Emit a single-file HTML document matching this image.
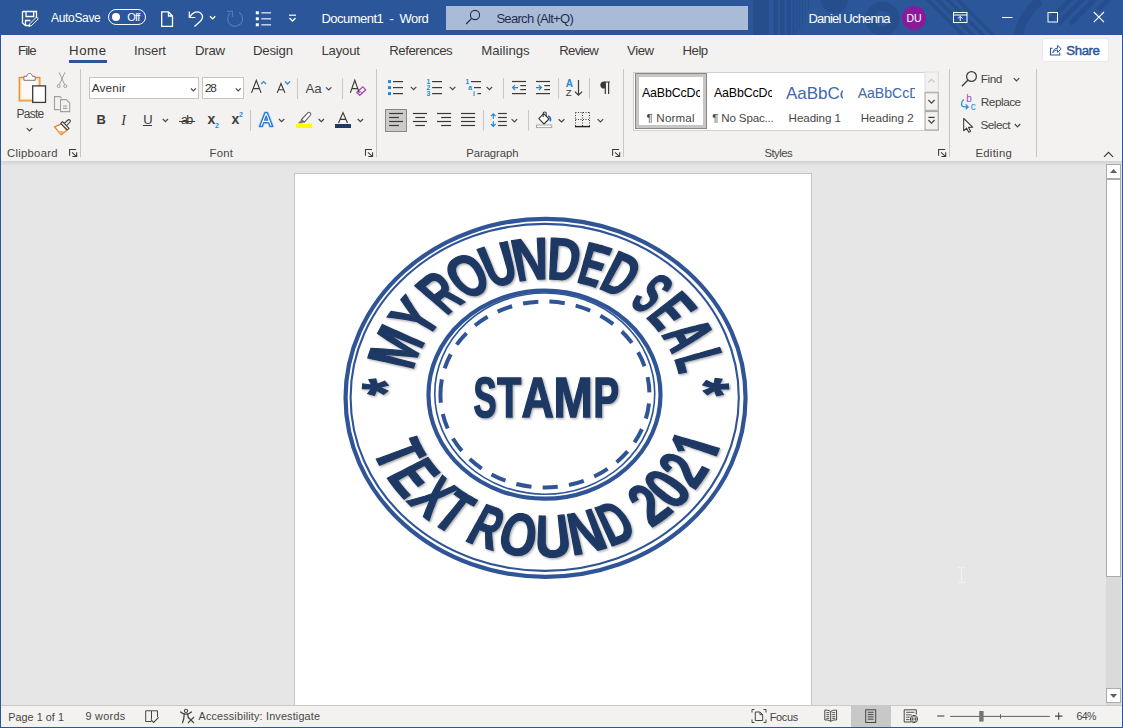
<!DOCTYPE html>
<html><head><meta charset="utf-8"><title>Document1 - Word</title>
<style>
html,body{margin:0;padding:0;}
body{width:1123px;height:728px;overflow:hidden;position:relative;background:#e6e6e6;font-family:"Liberation Sans", sans-serif;}
.a{position:absolute;}
.t{position:absolute;white-space:pre;line-height:1;font-family:"Liberation Sans", sans-serif;}
svg{position:absolute;overflow:visible;}
.sep{position:absolute;width:1px;background:#c8c6c4;}
</style></head>
<body>
<div class="a" style="left:0;top:0;width:1123px;height:35px;background:#2b579a"></div>
<svg style="left:0;top:0" width="1123" height="35" viewBox="0 0 1123 35"><defs><clipPath id="tb"><rect x="0" y="0" width="1123" height="35"/></clipPath></defs>
<g clip-path="url(#tb)" fill="#264e8d" stroke="none">
<rect x="753" y="0" width="16" height="35"/>
<rect x="773.5" y="0" width="4.5" height="35"/><rect x="780" y="0" width="4.5" height="35"/><rect x="786.5" y="0" width="4.5" height="35"/><rect x="792.5" y="0" width="2" height="35"/><rect x="796" y="0" width="1.5" height="35"/><rect x="799" y="0" width="1.2" height="30"/><rect x="802" y="0" width="1" height="25"/><rect x="805" y="0" width="1" height="18"/><rect x="808" y="0" width="1" height="10"/>
<circle cx="834.5" cy="-1" r="14"/>
<circle cx="882.5" cy="18.7" r="12.5" fill="none" stroke="#264e8d" stroke-width="9"/>
<g stroke="#264e8d" stroke-width="4" fill="none"><path d="M926 -2 L966 38 M936 -2 L976 38 M946 -2 L986 38 M956 -2 L996 38"/>
<path d="M1040 0 C1028 10 1021 22 1018 36" stroke-width="9"/>
<path d="M1048 22 L1072 -2 M1058 24 L1084 -2 M1070 24 L1096 -2 M1098 10 L1110 -2" stroke-width="5"/></g>
</g></svg>

<div class="a" style="left:1px;top:35px;width:1121px;height:126px;background:#f3f2f1"></div>
<div class="a" style="left:1px;top:161px;width:1121px;height:5px;background:linear-gradient(#d2d2d2,#e6e6e6)"></div>
<div class="a" style="left:294px;top:173px;width:516px;height:533px;background:#fff;border:1px solid #c6c6c6;border-bottom:none;box-sizing:content-box"></div>
<div class="a" style="left:1106px;top:164px;width:15px;height:541px;background:#dadada"></div>
<div class="a" style="left:1106px;top:164px;width:13px;height:13px;background:#fff;border:1px solid #ababab"></div>
<svg style="left:1110px;top:168.8px" width="7.2" height="4"><path d="M0 4 L3.6 0 L7.2 4Z" fill="#606060"/></svg>
<div class="a" style="left:1106px;top:179px;width:13px;height:396px;background:#fff;border:1px solid #ababab"></div>
<div class="a" style="left:1106px;top:688px;width:13px;height:13px;background:#fff;border:1px solid #ababab"></div>
<svg style="left:1110px;top:693.5px" width="7.2" height="4"><path d="M0 0 L3.6 4 L7.2 0Z" fill="#606060"/></svg>
<div class="a" style="left:961px;top:568px;width:1px;height:14px;background:#f1f1f1"></div>
<div class="a" style="left:958px;top:567px;width:3px;height:1px;background:#f1f1f1"></div><div class="a" style="left:962px;top:567px;width:3px;height:1px;background:#f1f1f1"></div>
<div class="a" style="left:958px;top:582px;width:3px;height:1px;background:#f1f1f1"></div><div class="a" style="left:962px;top:582px;width:3px;height:1px;background:#f1f1f1"></div>
<div class="a" style="left:1px;top:705px;width:1121px;height:22px;background:#f3f2f1;border-top:1px solid #c8c8c8;box-sizing:border-box"></div>
<div class="a" style="left:851px;top:706px;width:40px;height:21px;background:#c8c8c8"></div>
<div class="a" style="left:0;top:35px;width:1px;height:693px;background:#2b579a"></div>
<div class="a" style="left:1122px;top:35px;width:1px;height:693px;background:#2b579a"></div>
<div class="a" style="left:0;top:727px;width:1123px;height:1px;background:#2b579a"></div>
<span class="t" style="left:51.1px;top:11.7px;font-size:12px;color:#fff;letter-spacing:-0.335px;">AutoSave</span>
<div class="a" style="left:108px;top:9px;width:38px;height:16.2px;border:1.2px solid #fff;border-radius:8.2px;box-sizing:border-box"></div>
<div class="a" style="left:111.9px;top:12.9px;width:8.3px;height:8.3px;border-radius:4.2px;background:#fff"></div>
<span class="t" style="left:127.2px;top:12.2px;font-size:11px;color:#fff;letter-spacing:-0.692px;">Off</span>
<span class="t" style="left:321.4px;top:11.7px;font-size:13px;color:#fff;letter-spacing:-0.511px;">Document1  -  Word</span>
<div class="a" style="left:446px;top:6px;width:302px;height:24px;background:#aabbd7"></div>
<span class="t" style="left:496.4px;top:11.7px;font-size:13px;color:#1f2f4f;letter-spacing:-0.688px;">Search (Alt+Q)</span>
<span class="t" style="left:808.5px;top:11.7px;font-size:13px;color:#fff;letter-spacing:-0.801px;">Daniel Uchenna</span>
<div class="a" style="left:902px;top:5.5px;width:24px;height:24px;border-radius:12px;background:#8a1a9a"></div>
<span class="t" style="left:906.5px;top:12.9px;font-size:10.5px;color:#fff;letter-spacing:-0.172px;">DU</span>
<svg style="left:0;top:0" width="1123" height="35" viewBox="0 0 1123 35" fill="none" stroke="#fff" stroke-width="1.1">
<!-- save w/ pen -->
<path d="M22.5 11.5 H36.5 V18 M30 25.5 H25.5 L22.5 23 V11.5 M25.5 25.5 V20.5 H30.5 M26 11.5 V16.5 H33.7 V11.5" stroke-width="1.3"/>
<path d="M29 26.5 L30 23.5 L36.5 17 L38.3 18.8 L31.8 25.3 Z" stroke-width="1"/>
<!-- new doc -->
<path d="M161.7 11.8 H168.5 L172.5 16 V26.3 H161.7 Z M168.5 11.8 V16 H172.5" stroke-width="1.3"/>
<!-- undo -->
<path d="M189.3 11.5 V17.5 H195.3" stroke-width="1.2"/>
<path d="M189.8 17 C192 12.5 197 10.5 200.5 13 C203.5 15.3 203 19 200 21.5 L194.5 26.5" stroke-width="1.3"/>
<path d="M210 16.3 L212.6 18.9 L215.2 16.3" stroke-width="1.3"/>
<!-- redo dim -->
<g stroke="#4f7cb8" stroke-width="1.2"><path d="M227 11.4 H232.5 V17"/><path d="M230.1 13.2 A7.5 7.5 0 1 0 239.2 12.5"/></g>
<!-- bullets -->
<g fill="#fff" stroke="none"><rect x="255.8" y="11.3" width="3" height="3"/><rect x="255.8" y="17.3" width="3" height="3"/><rect x="255.8" y="23.3" width="3" height="3"/>
<rect x="261.3" y="12.3" width="9.8" height="1.1"/><rect x="261.3" y="18.3" width="9.8" height="1.1"/><rect x="261.3" y="24.3" width="9.8" height="1.1"/></g>
<!-- customize -->
<path d="M289 15.2 H296" stroke-width="1.2"/><path d="M289.5 18 L292.5 21 L295.5 18" stroke-width="1.3"/>
<!-- search -->
<circle cx="475" cy="15" r="4.6" stroke="#1f2f4f" stroke-width="1.1"/><path d="M471.7 18.4 L466.2 24" stroke="#1f2f4f" stroke-width="1.2"/>
<!-- ribbon display -->
<rect x="953.5" y="12.5" width="13.5" height="10" stroke-width="1"/><path d="M953.5 15 H967" stroke-width="1"/><path d="M960.2 21 V16.5 M958 18.5 L960.2 16.3 L962.4 18.5" stroke-width="1"/>
<!-- min max close -->
<path d="M1002 17.5 H1012.5" stroke-width="1"/>
<rect x="1048" y="12.5" width="9.5" height="9.5" stroke-width="1"/>
<path d="M1093.8 12 L1104 22.2 M1104 12 L1093.8 22.2" stroke-width="1.1"/>
</svg>

<span class="t" style="left:18.0px;top:44.0px;font-size:13.2px;color:#3b3a39;letter-spacing:-0.917px;">File</span>
<span class="t" style="left:69.0px;top:44.0px;font-size:13.2px;color:#323130;letter-spacing:0.604px;">Home</span>
<span class="t" style="left:134.0px;top:44.0px;font-size:13.2px;color:#3b3a39;letter-spacing:-0.197px;">Insert</span>
<span class="t" style="left:195.0px;top:44.0px;font-size:13.2px;color:#3b3a39;letter-spacing:-0.260px;">Draw</span>
<span class="t" style="left:253.0px;top:44.0px;font-size:13.2px;color:#3b3a39;letter-spacing:-0.212px;">Design</span>
<span class="t" style="left:321.5px;top:44.0px;font-size:13.2px;color:#3b3a39;letter-spacing:-0.222px;">Layout</span>
<span class="t" style="left:389.2px;top:44.0px;font-size:13.2px;color:#3b3a39;letter-spacing:-0.439px;">References</span>
<span class="t" style="left:481.3px;top:44.0px;font-size:13.2px;color:#3b3a39;letter-spacing:0.004px;">Mailings</span>
<span class="t" style="left:559.2px;top:44.0px;font-size:13.2px;color:#3b3a39;letter-spacing:-0.710px;">Review</span>
<span class="t" style="left:627.1px;top:44.0px;font-size:13.2px;color:#3b3a39;letter-spacing:-0.453px;">View</span>
<span class="t" style="left:682.6px;top:44.0px;font-size:13.2px;color:#3b3a39;letter-spacing:-0.508px;">Help</span>
<div class="a" style="left:69px;top:60px;width:38px;height:3px;background:#2b579a"></div>
<div class="a" style="left:1042.4px;top:38.4px;width:67px;height:23.2px;background:#fff;border:1px solid #ebe9e7;border-radius:3px;box-sizing:border-box"></div>
<span class="t" style="left:1066.3px;top:44.0px;font-size:13.2px;color:#2b579a;letter-spacing:-0.401px;-webkit-text-stroke:0.45px #2b579a;">Share</span>
<div class="sep" style="left:80px;top:69px;height:88px"></div>
<div class="sep" style="left:376px;top:69px;height:88px"></div>
<div class="sep" style="left:623px;top:69px;height:88px"></div>
<div class="sep" style="left:949px;top:69px;height:88px"></div>
<div class="sep" style="left:1036px;top:69px;height:88px"></div>
<span class="t" style="left:7.1px;top:147.5px;font-size:11.3px;color:#484644;letter-spacing:0.255px;">Clipboard</span>
<span class="t" style="left:209.6px;top:147.5px;font-size:11.3px;color:#484644;letter-spacing:0.197px;">Font</span>
<span class="t" style="left:466.2px;top:147.5px;font-size:11.3px;color:#484644;letter-spacing:-0.046px;">Paragraph</span>
<span class="t" style="left:764.4px;top:147.5px;font-size:11.3px;color:#484644;letter-spacing:-0.513px;">Styles</span>
<span class="t" style="left:975.4px;top:147.5px;font-size:11.3px;color:#484644;letter-spacing:0.309px;">Editing</span>
<span class="t" style="left:16.4px;top:108.4px;font-size:12px;color:#484644;letter-spacing:-0.697px;">Paste</span>
<div class="a" style="left:89px;top:77px;width:110px;height:22px;background:#fff;border:1px solid #c8c6c4;box-sizing:border-box"></div>
<div class="a" style="left:202px;top:77px;width:42px;height:22px;background:#fff;border:1px solid #c8c6c4;box-sizing:border-box"></div>
<span class="t" style="left:91.8px;top:83.0px;font-size:11.8px;color:#323130;letter-spacing:0.133px;">Avenir</span>
<span class="t" style="left:205.0px;top:83.0px;font-size:11.8px;color:#323130;letter-spacing:-1.425px;">28</span>
<span class="t" style="left:96.4px;top:112.7px;font-size:13px;color:#3b3a39;letter-spacing:0.000px;font-weight:700;">B</span>
<span class="t" style="left:121.3px;top:112.7px;font-size:14.2px;color:#3b3a39;letter-spacing:0.000px;font-family:'Liberation Serif',serif;font-style:italic;">I</span>
<span class="t" style="left:143.3px;top:112.7px;font-size:13px;color:#3b3a39;letter-spacing:0.000px;">U</span>
<div class="a" style="left:143px;top:125px;width:9px;height:1px;background:#3b3a39"></div>
<span class="t" style="left:180.9px;top:113.6px;font-size:12.5px;color:#3b3a39;letter-spacing:-1.506px;">ab</span>
<div class="a" style="left:179.4px;top:120.6px;width:15.6px;height:1px;background:#3b3a39"></div>
<span class="t" style="left:207.4px;top:112.3px;font-size:14px;color:#3b3a39;letter-spacing:0.000px;font-weight:700;">x</span>
<span class="t" style="left:214.9px;top:122.2px;font-size:7px;color:#2a8dd4;letter-spacing:0.000px;font-weight:700;">2</span>
<span class="t" style="left:231.6px;top:112.3px;font-size:14px;color:#3b3a39;letter-spacing:0.000px;font-weight:700;">x</span>
<span class="t" style="left:238.9px;top:111.2px;font-size:7px;color:#2a8dd4;letter-spacing:0.000px;font-weight:700;">2</span>
<span class="t" style="left:305.4px;top:81.6px;font-size:13.3px;color:#484644;letter-spacing:-0.066px;">Aa</span>
<div class="a" style="left:335px;top:124px;width:16px;height:4px;background:#1f3864"></div>
<div class="a" style="left:295.7px;top:124px;width:16.5px;height:4px;background:#ffff00"></div>
<span class="t" style="left:980.8px;top:73.8px;font-size:11.8px;color:#484644;letter-spacing:-0.484px;">Find</span>
<span class="t" style="left:980.8px;top:96.9px;font-size:11.8px;color:#484644;letter-spacing:-0.483px;">Replace</span>
<span class="t" style="left:980.5px;top:119.7px;font-size:11.8px;color:#484644;letter-spacing:-0.539px;">Select</span>
<div class="a" style="left:633px;top:71.5px;width:305.5px;height:59px;background:#fff;border:1px solid #d2d0ce;box-sizing:border-box"></div>
<div class="a" style="left:635px;top:73px;width:72px;height:56px;border:1px solid #8a8886;box-sizing:border-box"></div>
<div class="a" style="left:636px;top:74px;width:70px;height:54px;border:3px solid #c8c6c4;box-sizing:border-box"></div>
<span class="t" style="left:641.9px;top:87.4px;font-size:12.4px;color:#000;letter-spacing:-0.130px;width:58.3px;overflow:hidden;">AaBbCcDc</span>
<span class="t" style="left:646.6px;top:112.2px;font-size:11.6px;color:#484644;letter-spacing:0.155px;">¶ Normal</span>
<span class="t" style="left:713.9px;top:87.4px;font-size:12.4px;color:#000;letter-spacing:-0.130px;width:58.3px;overflow:hidden;">AaBbCcDc</span>
<span class="t" style="left:712.3px;top:112.2px;font-size:11.6px;color:#484644;letter-spacing:-0.190px;">¶ No Spac...</span>
<span class="t" style="left:785.9px;top:85.2px;font-size:17px;color:#4168ad;letter-spacing:0.005px;width:57.6px;overflow:hidden;">AaBbCc</span>
<span class="t" style="left:788.6px;top:112.2px;font-size:11.6px;color:#484644;letter-spacing:-0.057px;">Heading 1</span>
<span class="t" style="left:857.7px;top:85.6px;font-size:14.2px;color:#4168ad;letter-spacing:-0.083px;width:57.6px;overflow:hidden;">AaBbCcD</span>
<span class="t" style="left:860.7px;top:112.2px;font-size:11.6px;color:#484644;letter-spacing:0.018px;">Heading 2</span>
<svg style="left:0;top:0" width="1123" height="165" viewBox="0 0 1123 165" fill="none">
<!-- ===== Clipboard ===== -->
<rect x="19.3" y="77.5" width="20.5" height="23.3" fill="#faf9f8" stroke="#e3882a" stroke-width="1.3"/>
<rect x="20.6" y="78.8" width="17.9" height="20.7" stroke="#fad7a0" stroke-width="1.4"/>
<path d="M23.9 80.3 V76.3 H26.8 C26.8 72.6 32.3 72.6 32.3 76.3 H35.2 V80.3 Z" fill="#fff" stroke="#797775" stroke-width="1"/>
<rect x="32.7" y="85.9" width="12.8" height="16.5" fill="#fff" stroke="#3b3a39" stroke-width="1.3"/>
<path d="M26.8 128.2 L29.5 130.9 L32.2 128.2" stroke="#484644" stroke-width="1.2"/>
<!-- scissors -->
<g stroke="#a19f9d" stroke-width="1"><path d="M59.1 72.4 L64.6 84.6 M64.9 72.4 L59.4 84.6"/><circle cx="58.7" cy="86.1" r="1.5"/><circle cx="65.3" cy="86.1" r="1.5"/></g>
<!-- copy -->
<g stroke="#a19f9d" stroke-width="1.1"><path d="M59.6 109.6 H54.5 V96.6 H60 L61.6 98.2"/><path d="M60.5 99.6 H66.3 L69.7 103 V111.6 H60.5 Z" fill="#f3f2f1"/><path d="M63 106 H67.3 M63 108.4 H67.3"/></g>
<!-- format painter -->
<path d="M54.5 126.8 L61.5 123.9 L66.7 130.4 L61.1 134.7 Z" fill="#fff" stroke="#e8812d" stroke-width="1.3" stroke-linejoin="round"/>
<path d="M57.3 130.6 L64.6 131.6 L61.1 134.4 Z" fill="#f5b66a"/>
<path d="M64 123.6 L68 120 C69.4 118.8 71.2 120.6 70 122 L66.3 126 Z" fill="#f3f2f1" stroke="#3b3a39" stroke-width="1.1" stroke-linejoin="round"/>
<path d="M60.7 123.3 L62.5 121.7 L69 128.3 L67.3 129.9 Z" fill="#fff" stroke="#3b3a39" stroke-width="1.1" stroke-linejoin="round"/>
<!-- ===== Font ===== -->
<g stroke="#484644" stroke-width="1.2"><path d="M190.9 88.3 L193.4 90.8 L195.9 88.3"/><path d="M235.7 88.3 L238.2 90.8 L240.7 88.3"/>
<path d="M162.8 119 L165.4 121.6 L168 119"/><path d="M326 87.3 L328.7 90 L331.4 87.3"/>
<path d="M278.9 119 L281.6 121.7 L284.3 119"/><path d="M318.6 119 L321.3 121.7 L324 119"/><path d="M357.7 119 L360.4 121.7 L363.1 119"/></g>
<g stroke="#2a8dd4" stroke-width="1.3"><path d="M261.2 84 L263.6 81.6 L266 84"/><path d="M285 81.5 L287.5 84 L290 81.5"/></g>
<!-- eraser -->
<path d="M356.8 92.3 L362.8 86.8 L365.7 89.9 L359.7 95.3 Z" stroke="#a846b8" stroke-width="1.3" fill="#f3f2f1"/><path d="M359 90.3 L362 93.3" stroke="#a846b8" stroke-width="1"/>
<!-- text effects A -->
<path d="M259.6 126.4 L264.9 112.7 H267.4 L272.7 126.4 H270 L268.6 122.6 H263.7 L262.3 126.4 Z M264.6 120.2 H267.7 L266.15 116 Z" fill="none" stroke="#b5d6f5" stroke-width="2.8" stroke-linejoin="round"/>
<path d="M259.6 126.4 L264.9 112.7 H267.4 L272.7 126.4 H270 L268.6 122.6 H263.7 L262.3 126.4 Z M264.6 120.2 H267.7 L266.15 116 Z" fill="#fff" stroke="#1f74cf" stroke-width="1.25" stroke-linejoin="round" fill-rule="evenodd"/>
<!-- A glyphs -->
<path d="M251.5 92.9 L256.3 80.3 L261.1 92.9 M253.1 88.6 H259.5" stroke="#3b3a39" stroke-width="1.15" fill="none" stroke-linejoin="miter"/><path d="M277.2 92.9 L281.0 83.5 L284.9 92.9 M278.5 89.7 H283.6" stroke="#3b3a39" stroke-width="1.15" fill="none" stroke-linejoin="miter"/><path d="M350.3 92.9 L354.8 80.3 L359.3 92.9 M351.8 88.6 H357.8" stroke="#3b3a39" stroke-width="1.15" fill="none" stroke-linejoin="miter"/><path d="M338.5 122.9 L343.0 112.6 L347.5 122.9 M340.0 119.4 H346.0" stroke="#3b3a39" stroke-width="1.15" fill="none" stroke-linejoin="miter"/>
<!-- highlighter -->
<path d="M301.5 119.5 L308 112.6 C309.2 111.5 311.7 113.6 310.6 115 L304.3 122.2 Z" fill="#fff" stroke="#605e5c" stroke-width="1.1" stroke-linejoin="round"/><path d="M301.3 119.7 L304.2 122.4 L301.5 123.2 H297.8 Z" fill="#797775"/>
<!-- seps -->
<g stroke="#c8c6c4" stroke-width="1"><path d="M297.5 78.5 V99 M342.5 78.5 V99 M250.5 110 V131"/></g>
<!-- ===== Paragraph ===== -->
<rect x="388" y="80.1" width="3" height="3" fill="#1e8ad6"/>
<path d="M393.0 81.6 H403.0" stroke="#3b3a39" stroke-width="1.2"/>
<rect x="388" y="86.1" width="3" height="3" fill="#1e8ad6"/>
<path d="M393.0 87.6 H403.0" stroke="#3b3a39" stroke-width="1.2"/>
<rect x="388" y="92.1" width="3" height="3" fill="#1e8ad6"/>
<path d="M393.0 93.6 H403.0" stroke="#3b3a39" stroke-width="1.2"/>
<path d="M410.8 86.9 L413.6 89.7 L416.3 86.9" stroke="#484644" stroke-width="1.2" fill="none"/>
<text x="426.6" y="84.0" font-family="Liberation Sans" font-weight="700" font-size="6.8" fill="#1e8ad6">1</text>
<path d="M432.1 81.6 H442.0" stroke="#3b3a39" stroke-width="1.2"/>
<text x="426.6" y="90.0" font-family="Liberation Sans" font-weight="700" font-size="6.8" fill="#1e8ad6">2</text>
<path d="M432.1 87.6 H442.0" stroke="#3b3a39" stroke-width="1.2"/>
<text x="426.6" y="96.0" font-family="Liberation Sans" font-weight="700" font-size="6.8" fill="#1e8ad6">3</text>
<path d="M432.1 93.6 H442.0" stroke="#3b3a39" stroke-width="1.2"/>
<path d="M449.8 86.9 L452.6 89.7 L455.3 86.9" stroke="#484644" stroke-width="1.2" fill="none"/>
<text x="465.6" y="84" font-family="Liberation Sans" font-weight="700" font-size="6.8" fill="#1e8ad6">1</text><path d="M471.0 81.6 H481.0" stroke="#3b3a39" stroke-width="1.2"/>
<text x="468.3" y="89.8" font-family="Liberation Sans" font-weight="700" font-size="6.8" fill="#1e8ad6">a</text><path d="M474.0 87.6 H481.0" stroke="#3b3a39" stroke-width="1.2"/>
<text x="473" y="96" font-family="Liberation Sans" font-weight="700" font-size="6.8" fill="#1e8ad6">i</text><path d="M477.5 93.6 H481.0" stroke="#3b3a39" stroke-width="1.2"/>
<path d="M486.6 86.9 L489.4 89.7 L492.2 86.9" stroke="#484644" stroke-width="1.2" fill="none"/>
<g stroke="#c8c6c4" stroke-width="1"><path d="M503.5 78.2 V98.7 M558.5 78.2 V98.7 M589.5 78.2 V98.7 M483.5 110.2 V130.7 M528.5 110.2 V130.7"/></g>
<path d="M512.0 81.5 H526.0" stroke="#3b3a39" stroke-width="1.2"/><path d="M520.3 85.6 H526.0" stroke="#3b3a39" stroke-width="1.2"/><path d="M520.3 89.6 H526.0" stroke="#3b3a39" stroke-width="1.2"/><path d="M512.0 93.6 H526.0" stroke="#3b3a39" stroke-width="1.2"/>
<path d="M518 87.6 H512.6 M515 85.2 L512.6 87.6 L515 90" stroke="#1e8ad6" stroke-width="1.2" fill="none"/>
<path d="M536.0 81.5 H550.0" stroke="#3b3a39" stroke-width="1.2"/><path d="M544.3 85.6 H550.0" stroke="#3b3a39" stroke-width="1.2"/><path d="M544.3 89.6 H550.0" stroke="#3b3a39" stroke-width="1.2"/><path d="M536.0 93.6 H550.0" stroke="#3b3a39" stroke-width="1.2"/>
<path d="M536 87.6 H541.4 M539 85.2 L541.4 87.6 L539 90" stroke="#1e8ad6" stroke-width="1.2" fill="none"/>
<text x="565.7" y="87" font-family="Liberation Sans" font-weight="700" font-size="10" fill="#1e8ad6">A</text>
<text x="565.8" y="95.5" font-family="Liberation Sans" font-weight="400" font-size="9.6" fill="#3b3a39">Z</text>
<path d="M578.5 80 V95 M574.9 91.6 L578.5 95.2 L582.1 91.6" stroke="#3b3a39" stroke-width="1.2" fill="none"/>
<path d="M604.6 82 H610 M605.3 82 V94 M608.6 82 V94" stroke="#3b3a39" stroke-width="1.2" fill="none"/><path d="M605.3 81.4 H604.2 C599 81.4 599 88.6 604.2 88.6 H605.3 Z" fill="#3b3a39"/>
<rect x="385.5" y="109.5" width="21" height="22" fill="#cdcbc9" stroke="#8a8886" stroke-width="1"/>
<path d="M389.1 113.5 H403.0" stroke="#3b3a39" stroke-width="1.2"/>
<path d="M412.9 113.5 H427.0" stroke="#3b3a39" stroke-width="1.2"/>
<path d="M437.0 113.5 H451.1" stroke="#3b3a39" stroke-width="1.2"/>
<path d="M461.0 113.5 H475.1" stroke="#3b3a39" stroke-width="1.2"/>
<path d="M498.1 113.5 H506.8" stroke="#3b3a39" stroke-width="1.2"/>
<path d="M389.1 117.5 H399.0" stroke="#3b3a39" stroke-width="1.2"/>
<path d="M415.3 117.5 H424.9" stroke="#3b3a39" stroke-width="1.2"/>
<path d="M441.1 117.5 H451.1" stroke="#3b3a39" stroke-width="1.2"/>
<path d="M461.0 117.5 H475.1" stroke="#3b3a39" stroke-width="1.2"/>
<path d="M498.1 117.5 H506.8" stroke="#3b3a39" stroke-width="1.2"/>
<path d="M389.1 121.5 H403.0" stroke="#3b3a39" stroke-width="1.2"/>
<path d="M412.9 121.5 H427.0" stroke="#3b3a39" stroke-width="1.2"/>
<path d="M437.0 121.5 H451.1" stroke="#3b3a39" stroke-width="1.2"/>
<path d="M461.0 121.5 H475.1" stroke="#3b3a39" stroke-width="1.2"/>
<path d="M498.1 121.5 H506.8" stroke="#3b3a39" stroke-width="1.2"/>
<path d="M389.1 125.5 H399.0" stroke="#3b3a39" stroke-width="1.2"/>
<path d="M415.3 125.5 H424.9" stroke="#3b3a39" stroke-width="1.2"/>
<path d="M441.1 125.5 H451.1" stroke="#3b3a39" stroke-width="1.2"/>
<path d="M461.0 125.5 H475.1" stroke="#3b3a39" stroke-width="1.2"/>
<path d="M498.1 125.5 H506.8" stroke="#3b3a39" stroke-width="1.2"/>
<path d="M493.3 113.8 V118.8 M493.3 121.2 V126.4 M491 116.2 L493.3 113.8 L495.6 116.2 M491 124 L493.3 126.4 L495.6 124" stroke="#1e8ad6" stroke-width="1.2" fill="none"/>
<path d="M511.6 119.2 L514.4 122.0 L517.2 119.2" stroke="#484644" stroke-width="1.2" fill="none"/>
<path d="M543.6 113.6 L549 119 L544 124 L538.8 118.6 Z" fill="#fff" stroke="#3b3a39" stroke-width="1.1" stroke-linejoin="round"/><path d="M543.2 117 V113.4 C543.2 111.6 546.2 111.6 546.2 113.4 V116" stroke="#3b3a39" stroke-width="1.1" fill="none"/>
<path d="M548 116 C550.5 117 550.8 119.5 550.2 121.2" stroke="#1e6fd0" stroke-width="1.6" fill="none"/>
<rect x="536.5" y="125" width="15.3" height="2.6" fill="#fff" stroke="#a19f9d" stroke-width="0.9"/>
<path d="M558.6 119.2 L561.5 122.0 L564.4 119.2" stroke="#484644" stroke-width="1.2" fill="none"/>
<g stroke="#3b3a39" stroke-width="1" stroke-dasharray="1 1.5" fill="none"><path d="M575.5 112.5 H590 M575.5 112.5 V126 M589.5 112.5 V126 M582.5 112.5 V126 M575.5 119.5 H590"/></g>
<path d="M575 126.6 H590" stroke="#201f1e" stroke-width="1.4"/>
<path d="M597.6 119.2 L600.4 122.0 L603.2 119.2" stroke="#484644" stroke-width="1.2" fill="none"/>
<!-- ===== Styles buttons / Editing ===== -->
<rect x="925" y="72" width="13.2" height="19.5" fill="#f3f2f1" stroke="#e1dfdd" stroke-width="1"/>
<path d="M928.4 82.4 L931.5 79.3 L934.6 82.4" stroke="#c8c6c4" stroke-width="1.2" fill="none"/>
<rect x="925" y="92.7" width="13.2" height="17.6" fill="#f3f2f1" stroke="#a19f9d" stroke-width="1"/>
<path d="M928.4 100.0 L931.5 103.2 L934.6 100.0" stroke="#484644" stroke-width="1.2" fill="none"/>
<rect x="925" y="111.6" width="13.2" height="18.4" fill="#f3f2f1" stroke="#a19f9d" stroke-width="1"/>
<path d="M928.4 117.4 H934.6" stroke="#3b3a39" stroke-width="1.2"/><path d="M928.4 120.0 L931.5 123.2 L934.6 120.0" stroke="#484644" stroke-width="1.2" fill="none"/>
<circle cx="971.5" cy="76.5" r="4.9" stroke="#3b3a39" stroke-width="1.2" fill="none"/><path d="M968 80 L961.9 86.2" stroke="#3b3a39" stroke-width="1.3"/>
<path d="M1013.8 78.1 L1016.5 80.9 L1019.2 78.1" stroke="#484644" stroke-width="1.2" fill="none"/>
<text x="966.3" y="101.7" font-family="Liberation Sans" font-size="10" fill="#a846b8">b</text><text x="970.7" y="109.8" font-family="Liberation Sans" font-size="10" fill="#1e8ad6">c</text>
<path d="M963.8 99.6 C960.6 102 960.8 106.6 964 106.9 H968 M965.6 104.4 L968.2 106.9 L965.6 109.4" stroke="#1e8ad6" stroke-width="1.2" fill="none"/>
<path d="M963.7 118.5 V130.8 L966.6 128.2 L968.8 132.2 L970.6 131.3 L968.5 127.4 L972.6 127.2 Z" fill="#fff" stroke="#3b3a39" stroke-width="1.1" stroke-linejoin="round"/>
<path d="M1014.8 124.0 L1017.5 126.8 L1020.2 124.0" stroke="#484644" stroke-width="1.2" fill="none"/>
<path d="M1104 156.8 L1108.5 152.3 L1113 156.8" stroke="#3b3a39" stroke-width="1.2" fill="none"/>
<g stroke="#2b579a" stroke-width="1.1" fill="none"><path d="M1052.6 48.2 H1050.5 V55 H1059.7 V52.6"/><path d="M1052.9 52.6 C1053.2 49.6 1055.3 48.2 1057.6 48.2 V45.4 L1061.2 48.9 L1057.6 52.4 V50 C1055.6 50 1054 50.8 1052.9 52.6 Z" stroke-width="1" stroke-linejoin="round"/></g>
<!-- launchers -->
<path d="M365.5 155.8 V149.5 H372.0 M367.9 152.4 L372.3 156.3 M368.3 156.4 H372.6 V152.3" stroke="#3b3a39" stroke-width="1.05" fill="none"/><path d="M69.6 155.8 V149.5 H76.1 M72.0 152.4 L76.4 156.3 M72.4 156.4 H76.7 V152.3" stroke="#3b3a39" stroke-width="1.05" fill="none"/><path d="M612.6 155.8 V149.5 H619.1 M615.0 152.4 L619.4 156.3 M615.4 156.4 H619.7 V152.3" stroke="#3b3a39" stroke-width="1.05" fill="none"/><path d="M938.6 155.8 V149.5 H945.1 M941.0 152.4 L945.4 156.3 M941.4 156.4 H945.7 V152.3" stroke="#3b3a39" stroke-width="1.05" fill="none"/>
</svg>

<span class="t" style="left:8.3px;top:711.9px;font-size:10.8px;color:#484644;letter-spacing:0.037px;">Page 1 of 1</span>
<span class="t" style="left:85.4px;top:711.2px;font-size:10.8px;color:#484644;letter-spacing:0.331px;">9 words</span>
<span class="t" style="left:198.5px;top:711.4px;font-size:10.8px;color:#484644;letter-spacing:0.179px;">Accessibility: Investigate</span>
<span class="t" style="left:769.8px;top:711.5px;font-size:11px;color:#484644;letter-spacing:-0.392px;">Focus</span>
<span class="t" style="left:1076.6px;top:711.0px;font-size:10.6px;color:#484644;letter-spacing:-0.702px;">64%</span>
<svg style="left:0;top:700px" width="1123" height="28" viewBox="0 700 1123 28" fill="none" stroke="#484644" stroke-width="1">
<!-- proofing book -->
<path d="M151.5 721.5 H145.7 V710.8 H151.5 V719.5 M151.5 710.8 H157.5 V717"/><path d="M150.8 719.6 L153.6 722.4 L158.6 717.4" stroke-width="1.1"/>
<!-- accessibility -->
<circle cx="186" cy="710.9" r="1.6" stroke-width="1.1"/><path d="M180.6 712 C182.5 713.8 184 714.2 186 714.2 C188 714.2 189.5 713.8 191.4 712 M184.2 714.2 C184.2 718 183.4 720.5 182.6 722.6 M187.8 714.2 C187.8 716 188.1 717 188.5 718" stroke-linecap="round" stroke-width="1.3"/>
<path d="M187.9 717 L194 723 M194 717 L187.9 723" stroke-width="1.1"/>
<!-- focus -->
<path d="M754.5 709.5 H752 V712.5 M763.5 709.5 H766 V712.5 M754.5 722.5 H752 V719.5 M763.5 722.5 H766 V719.5"/>
<path d="M755.3 712 H760 L762.7 714.7 V720.5 H755.3 Z M760 712 V714.7 H762.7"/>
<!-- read mode -->
<path d="M830.7 711.5 C829 710.2 826.5 710 824.8 710.2 V720 C826.5 719.8 829 720 830.7 721.3 C832.4 720 834.9 719.8 836.6 720 V710.2 C834.9 710 832.4 710.2 830.7 711.5 V721.3"/>
<path d="M826.3 712.6 H829.3 M826.3 714.6 H829.3 M826.3 716.6 H829.3 M826.3 718.4 H829.3 M832.2 712.6 H835.2 M832.2 714.6 H835.2 M832.2 716.6 H835.2 M832.2 718.4 H835.2" stroke-width=".9"/>
<!-- print layout -->
<rect x="865.7" y="709.8" width="10" height="12.7"/><path d="M867.8 712.3 H873.6 M867.8 714.6 H873.6 M867.8 716.9 H873.6 M867.8 719.2 H873.6" stroke-width="1"/>
<!-- web layout -->
<path d="M911 722 H904.2 V709.8 H916.3 V714.5"/><path d="M906 712.3 H914.5 M906 714.8 H911.5 M906 717.2 H909.8 M906 719.6 H909.5" stroke-width=".9"/>
<circle cx="914" cy="719" r="3.6" fill="#f3f2f1"/><path d="M910.4 719 H917.6 M914 715.4 C912 717.5 912 720.5 914 722.6 M914 715.4 C916 717.5 916 720.5 914 722.6" stroke-width=".8"/>
<!-- zoom -->
<path d="M937.2 716 H944.4" stroke-width="1.1"/>
<path d="M950.2 716.4 H1049.8" stroke="#605e5c" stroke-width="1"/>
<path d="M1000.5 714.2 V718.6" stroke="#605e5c"/>
<rect x="979.2" y="711" width="4.4" height="10.6" fill="#777573" stroke="none"/>
<path d="M1055 716.1 H1062.4 M1058.7 712.4 V719.8" stroke-width="1.1"/>
</svg>

<svg style="left:0;top:0" width="1123" height="728" viewBox="0 0 1123 728">
<defs><filter id="sh" x="-5%" y="-5%" width="110%" height="110%"><feDropShadow dx="1.2" dy="1.2" stdDeviation="0.8" flood-color="#000" flood-opacity="0.35"/></filter></defs>
<ellipse cx="545.55" cy="397.85" rx="200.0" ry="179.0" fill="none" stroke="#2f5597" stroke-width="4.2"/>
<ellipse cx="544.7" cy="397.4" rx="194.1" ry="173.5" fill="none" stroke="#2f5597" stroke-width="2.1"/>
<ellipse cx="544.5" cy="394.7" rx="116.0" ry="104.0" fill="none" stroke="#2f5597" stroke-width="4.2"/>
<ellipse cx="544.75" cy="393.6" rx="110.0" ry="100.6" fill="none" stroke="#2f5597" stroke-width="1.6"/>
<path d="M440.45000000000005 394.5 A104.5 93.0 0 0 1 649.45 394.5 A104.5 93.0 0 0 1 440.45000000000005 394.5" fill="none" stroke="#2f5597" stroke-width="4.0" stroke-dasharray="15.3 11.3"/>
<g fill="#1f3864" stroke="#1f3864" stroke-width="1.2" stroke-linejoin="miter" filter="url(#sh)">
<path d="M371.8 385.0 370.4 382.4 368.9 379.7 375.7 379.0 376.4 381.6 377.1 384.3 380.8 382.7 384.6 381.2 388.2 385.1 383.9 386.2 379.5 387.4 383.6 389.1 387.8 390.8 383.5 394.2 380.0 392.3 376.6 390.2 375.5 392.7 374.4 395.3 367.8 393.7 369.7 391.2 371.5 388.8 366.9 388.7 362.4 388.7 362.7 383.9 367.3 384.5 371.8 385.0ZM421.9 347.7 418.1 346.2 414.4 344.7 410.7 343.2 407.0 341.7 403.3 340.2 399.6 338.7 395.9 337.2 395.6 337.1 395.3 337.0 395.0 336.9 394.7 336.8 394.5 336.6 394.2 336.5 393.7 336.3 392.9 336.0 391.9 335.5 390.5 334.9 388.7 334.2 386.7 333.3 389.0 334.8 391.1 336.2 393.0 337.3 394.6 338.4 395.9 339.3 397.0 340.0 400.6 342.4 404.2 344.7 407.8 347.0 411.5 349.2 415.2 351.4 418.9 353.6 417.3 357.2 412.9 356.7 408.4 356.2 404.0 355.8 399.5 355.4 395.0 355.1 390.5 354.8 386.3 354.4 382.0 354.2 377.7 353.9 380.1 354.4 382.2 354.9 384.0 355.3 385.5 355.7 386.7 356.0 387.6 356.2 391.5 357.2 395.5 358.3 399.4 359.3 403.3 360.3 407.2 361.3 411.1 362.3 415.0 363.4 414.2 365.7 413.5 368.0 409.4 367.1 405.2 366.2 401.1 365.2 396.9 364.3 392.7 363.4 388.6 362.5 384.4 361.5 380.3 360.6 376.1 359.7 372.0 358.8 367.8 357.8 368.8 354.7 369.9 351.5 371.0 348.4 375.5 348.6 380.1 348.9 384.6 349.2 389.1 349.5 393.6 349.9 398.1 350.4 400.7 350.7 407.0 351.7 400.5 348.1 397.1 346.1 393.8 344.1 390.5 342.0 387.2 339.9 384.0 337.8 380.7 335.6 377.5 333.4 379.1 330.5 380.7 327.5 382.4 324.6 386.2 326.3 390.0 328.0 393.8 329.7 397.6 331.4 401.4 333.1 405.2 334.8 409.0 336.5 412.9 338.2 416.7 339.9 420.5 341.6 424.3 343.3 423.0 345.5 421.9 347.7ZM420.3 317.1 424.2 319.6 428.1 322.1 432.0 324.6 435.9 327.1 434.3 329.0 432.7 330.9 428.7 328.6 424.7 326.2 420.7 323.9 416.7 321.5 413.1 320.8 409.5 320.1 405.8 319.5 402.1 318.9 398.4 318.3 394.7 317.9 390.9 317.4 387.1 317.0 389.1 314.2 391.1 311.4 395.4 312.1 399.6 312.8 403.8 313.6 407.9 314.5 412.1 315.4 409.7 312.3 407.4 309.2 405.1 306.0 402.9 302.7 400.8 299.5 403.2 296.9 405.6 294.3 407.3 297.3 409.0 300.2 410.8 303.1 412.6 306.0 414.4 308.8 416.4 311.6 418.3 314.4 420.3 317.1ZM460.5 304.9 457.4 303.0 454.2 301.3 451.0 299.5 447.8 297.8 444.5 296.2 442.0 298.1 439.6 300.1 442.7 302.9 445.7 305.7 448.8 308.6 451.9 311.4 450.1 312.9 448.3 314.4 445.2 311.8 442.2 309.2 439.1 306.6 436.1 304.0 433.0 301.4 430.0 298.8 426.9 296.2 423.8 293.5 420.8 290.9 417.7 288.3 414.7 285.7 417.0 283.7 419.3 281.8 421.6 279.9 424.0 278.0 426.5 276.1 427.9 275.2 429.4 274.4 431.0 273.9 432.5 273.6 434.0 273.6 435.6 273.8 437.1 274.2 438.6 274.8 440.1 275.6 441.5 276.7 442.9 277.9 444.3 279.4 445.2 280.6 446.0 281.7 446.7 282.9 447.3 284.0 447.7 285.1 448.0 286.3 448.3 287.4 448.3 288.4 448.3 289.4 448.1 290.3 447.9 291.1 447.4 291.9 451.0 293.8 454.6 295.7 458.1 297.7 461.6 299.8 465.0 301.9 462.8 303.3 460.5 304.9ZM439.6 283.0 438.1 281.7 436.7 280.8 435.3 280.4 433.8 280.3 432.4 280.7 430.9 281.6 428.8 283.2 426.8 284.8 424.8 286.4 427.9 289.4 431.1 292.3 434.3 295.2 436.2 293.7 438.2 292.2 440.1 290.7 440.7 290.2 441.2 289.7 441.5 289.1 441.7 288.6 441.8 288.0 441.8 287.3 441.7 286.6 441.5 286.0 441.2 285.2 440.8 284.5 440.2 283.8 439.6 283.0ZM482.2 269.7 483.1 271.6 483.9 273.5 484.5 275.3 485.0 277.2 485.4 278.9 485.7 280.6 485.8 282.3 485.8 283.8 485.7 285.3 485.5 286.7 485.2 288.0 484.7 289.2 484.2 290.3 483.5 291.4 482.7 292.3 481.8 293.1 480.8 293.8 479.6 294.4 477.7 295.2 475.8 295.6 473.9 295.7 471.8 295.5 469.7 295.0 467.5 294.2 465.3 293.0 463.0 291.6 460.8 290.0 458.5 288.0 456.3 285.8 454.1 283.2 452.2 280.5 450.6 278.0 449.3 275.4 448.5 273.0 448.0 270.6 448.0 268.3 448.3 266.1 449.1 264.0 450.2 262.1 451.8 260.4 453.7 258.9 456.1 257.5 458.6 256.5 461.1 255.9 463.7 255.6 466.1 255.8 468.5 256.3 470.9 257.3 473.1 258.5 475.2 260.1 477.2 262.1 479.0 264.3 480.6 266.8 482.2 269.7ZM476.0 272.1 474.9 270.2 473.7 268.5 472.5 267.0 471.2 265.7 469.9 264.6 468.5 263.7 467.0 263.1 465.6 262.7 464.1 262.5 462.7 262.6 461.3 262.9 459.9 263.4 458.5 264.2 457.5 265.1 456.6 266.1 456.0 267.3 455.6 268.6 455.5 270.0 455.7 271.5 456.0 273.0 456.6 274.7 457.4 276.4 458.5 278.1 459.7 280.0 461.1 281.8 462.5 283.4 464.0 284.8 465.4 286.0 466.8 287.1 468.2 287.9 469.6 288.5 471.0 289.0 472.3 289.2 473.5 289.2 474.7 289.0 475.8 288.5 476.9 287.9 477.8 287.1 478.5 286.2 478.9 285.2 479.2 284.0 479.4 282.6 479.3 281.2 479.0 279.6 478.6 277.9 477.9 276.1 477.1 274.1 476.0 272.1ZM505.6 284.8 503.9 285.2 502.2 285.3 500.6 285.1 499.0 284.8 497.5 284.2 496.0 283.3 494.5 282.2 493.1 280.9 491.7 279.3 490.4 277.6 489.2 275.6 488.1 273.3 486.5 269.9 484.9 266.5 483.4 263.1 481.8 259.7 480.2 256.3 478.7 252.9 477.1 249.5 480.6 248.3 484.1 247.2 485.5 250.6 486.9 253.9 488.2 257.3 489.6 260.6 491.0 264.0 492.4 267.4 493.7 270.7 494.4 272.2 495.0 273.5 495.8 274.6 496.5 275.6 497.3 276.5 498.1 277.2 498.9 277.8 499.8 278.2 500.7 278.5 501.6 278.6 502.5 278.5 503.4 278.3 504.4 278.0 505.2 277.6 505.9 277.0 506.5 276.3 507.0 275.6 507.3 274.6 507.5 273.6 507.6 272.5 507.6 271.2 507.5 269.9 507.2 268.5 506.8 266.9 505.8 263.5 504.8 260.1 503.8 256.7 502.8 253.3 501.8 249.9 500.7 246.5 499.7 243.0 503.4 242.3 507.1 241.5 507.9 245.1 508.8 248.6 509.7 252.1 510.5 255.6 511.4 259.1 512.3 262.7 513.1 266.2 513.6 268.6 513.9 271.0 514.0 273.1 513.8 275.1 513.5 276.9 512.9 278.6 512.1 280.1 511.2 281.4 510.1 282.6 508.8 283.5 507.3 284.2 505.6 284.8ZM537.7 279.2 536.2 276.1 534.6 273.0 533.0 270.0 531.3 267.0 529.5 263.9 527.7 260.9 525.8 257.9 523.8 255.0 521.8 252.0 519.7 249.1 520.1 250.6 520.5 251.9 520.8 253.2 521.0 254.3 521.2 255.4 521.4 256.4 522.1 260.3 522.8 264.3 523.5 268.3 524.1 272.3 524.8 276.3 525.5 280.3 522.8 280.6 520.2 281.1 519.4 277.4 518.6 273.7 517.8 270.1 517.0 266.4 516.2 262.7 515.4 259.1 514.6 255.4 513.8 251.8 513.0 248.1 512.2 244.4 511.4 240.8 516.0 240.1 520.6 239.5 522.8 242.4 524.9 245.4 527.0 248.4 528.9 251.4 530.8 254.5 532.7 257.5 534.4 260.6 536.1 263.7 537.8 266.8 539.3 269.9 539.1 268.5 539.0 267.1 538.8 265.8 538.7 264.5 538.6 263.2 538.5 262.0 538.3 258.0 538.1 254.0 537.9 250.1 537.7 246.1 537.5 242.1 537.3 238.2 540.9 238.0 544.5 238.0 544.6 241.7 544.6 245.5 544.6 249.2 544.6 252.9 544.7 256.6 544.7 260.4 544.7 264.1 544.7 267.8 544.7 271.5 544.8 275.3 544.8 279.0 541.2 279.1 537.7 279.2ZM578.0 261.1 577.5 263.1 576.8 265.0 576.2 266.8 575.4 268.5 574.6 270.1 573.7 271.6 572.8 273.0 571.8 274.3 570.8 275.4 569.8 276.4 568.7 277.3 567.6 278.0 566.4 278.6 565.3 279.1 564.1 279.5 562.9 279.7 561.7 279.8 560.4 279.7 557.8 279.5 555.1 279.3 552.4 279.2 549.8 279.1 549.9 275.3 550.0 271.6 550.2 267.9 550.3 264.2 550.5 260.4 550.6 256.7 550.7 253.0 550.9 249.3 551.0 245.5 551.1 241.8 551.3 238.1 554.5 238.2 557.7 238.4 560.9 238.6 564.1 238.8 566.9 239.2 569.5 240.0 571.8 241.0 573.8 242.3 575.4 243.8 576.8 245.6 577.8 247.7 578.5 250.0 578.9 252.5 578.9 255.1 578.6 258.0 578.0 261.1ZM571.6 260.0 571.9 258.0 572.0 256.0 572.0 254.2 571.7 252.6 571.3 251.1 570.7 249.7 569.9 248.5 568.9 247.6 567.7 246.7 566.4 246.1 564.9 245.7 563.2 245.4 558.1 245.0 557.8 249.0 557.5 252.9 557.2 256.9 556.8 260.8 556.5 264.8 556.2 268.7 555.9 272.7 558.3 272.9 560.8 273.1 562.0 273.1 563.2 272.9 564.3 272.5 565.3 271.9 566.4 271.0 567.4 270.0 568.3 268.7 569.1 267.3 569.9 265.8 570.5 264.0 571.1 262.1 571.6 260.0ZM578.0 282.4 579.0 278.8 580.1 275.2 581.1 271.6 582.1 267.9 583.1 264.3 584.1 260.7 585.2 257.1 586.2 253.5 587.2 249.8 588.2 246.2 589.3 242.6 591.8 243.2 594.4 243.8 596.9 244.4 599.4 245.1 602.0 245.7 604.5 246.5 607.0 247.2 609.4 248.0 611.9 248.8 609.1 255.0 606.5 254.1 603.9 253.3 601.3 252.5 598.6 251.8 596.0 251.1 593.3 250.4 591.7 255.3 590.1 260.3 592.4 260.9 594.7 261.5 597.0 262.1 599.2 262.8 601.5 263.5 603.8 264.2 601.1 270.4 598.9 269.7 596.7 269.1 594.6 268.4 592.4 267.8 590.2 267.2 588.0 266.7 586.9 270.2 585.8 273.6 584.6 277.1 586.6 277.6 588.6 278.1 590.5 278.6 592.5 279.2 594.4 279.8 596.3 280.4 598.2 281.1 595.4 287.2 593.5 286.6 591.6 286.0 589.7 285.4 587.8 284.8 585.8 284.3 583.9 283.8 581.9 283.3 580.0 282.9 578.0 282.4ZM632.0 280.3 630.7 282.0 629.4 283.6 628.0 285.1 626.6 286.4 625.2 287.7 623.8 288.8 622.4 289.9 621.0 290.8 619.7 291.5 618.4 292.2 617.1 292.7 615.8 293.1 614.5 293.3 613.3 293.4 612.1 293.4 611.0 293.3 610.0 293.0 608.9 292.6 606.7 291.6 604.5 290.7 602.3 289.8 600.1 288.9 601.8 285.5 603.5 282.1 605.2 278.7 606.9 275.2 608.6 271.8 610.4 268.4 612.1 265.0 613.8 261.6 615.5 258.2 617.2 254.8 618.9 251.3 621.6 252.4 624.3 253.5 627.0 254.6 629.6 255.8 631.9 257.0 633.8 258.4 635.3 259.9 636.5 261.7 637.2 263.6 637.6 265.7 637.6 267.9 637.3 270.1 636.5 272.5 635.4 275.0 633.9 277.6 632.0 280.3ZM626.9 277.5 628.1 275.7 629.1 273.9 629.8 272.2 630.3 270.7 630.6 269.1 630.6 267.7 630.4 266.4 630.0 265.2 629.3 264.1 628.4 263.2 627.3 262.3 626.0 261.6 621.8 259.8 619.9 263.4 617.9 266.9 615.9 270.5 613.9 274.1 611.9 277.6 610.0 281.2 608.0 284.8 610.0 285.7 612.1 286.6 613.1 286.9 614.2 287.1 615.3 287.0 616.5 286.7 617.8 286.2 619.1 285.5 620.4 284.6 621.7 283.6 623.0 282.3 624.3 280.9 625.6 279.3 626.9 277.5ZM651.7 305.5 650.0 306.8 648.5 308.0 646.9 308.9 645.4 309.7 644.0 310.3 642.6 310.7 641.3 310.9 640.0 311.0 638.8 310.8 637.7 310.5 636.6 310.0 635.5 309.3 634.7 308.6 634.0 307.8 633.6 306.9 633.2 306.0 633.1 305.0 633.1 303.9 633.3 302.7 633.7 301.5 634.3 300.2 635.0 298.8 635.9 297.3 637.0 295.7 639.1 296.3 641.3 297.0 640.7 297.9 640.1 298.7 639.7 299.5 639.4 300.2 639.2 300.9 639.1 301.5 639.1 302.1 639.2 302.7 639.4 303.2 639.7 303.7 640.1 304.2 640.5 304.6 641.7 305.3 642.8 305.6 644.1 305.5 645.4 305.1 646.7 304.4 648.2 303.2 648.6 302.8 649.0 302.4 649.3 302.0 649.6 301.6 649.8 301.2 650.0 300.8 650.2 300.4 650.3 300.1 650.4 299.7 650.4 299.3 650.4 298.9 650.4 298.5 650.3 298.1 650.1 297.6 649.9 297.0 649.7 296.4 649.3 295.7 648.9 294.9 648.6 294.2 648.3 293.5 648.0 292.9 647.8 292.4 647.6 292.0 647.5 291.6 647.4 291.2 647.4 290.9 647.3 290.5 647.3 290.1 647.3 289.8 647.3 289.4 647.3 289.0 647.3 288.6 647.4 288.2 647.5 287.8 647.6 287.4 647.7 287.0 647.9 286.5 648.1 286.1 648.3 285.6 648.6 285.2 648.8 284.7 649.1 284.2 649.5 283.7 649.8 283.2 650.2 282.6 650.7 282.1 651.1 281.5 651.6 281.0 653.0 279.6 654.3 278.5 655.6 277.5 657.0 276.7 658.4 276.1 659.8 275.7 661.1 275.6 662.5 275.6 663.9 275.8 665.2 276.3 666.5 276.9 667.8 277.8 668.9 278.8 669.8 279.8 670.5 280.8 671.0 281.8 671.2 282.8 671.3 283.9 671.1 285.0 670.7 286.1 670.2 287.3 669.3 288.6 668.3 289.9 667.1 291.3 664.9 290.2 662.6 289.2 663.2 288.4 663.7 287.8 664.0 287.1 664.3 286.5 664.5 285.9 664.6 285.3 664.6 284.8 664.5 284.2 664.3 283.7 664.0 283.2 663.6 282.8 663.1 282.3 661.9 281.6 660.7 281.2 659.5 281.2 658.3 281.5 657.0 282.3 655.8 283.3 655.5 283.7 655.1 284.1 654.9 284.5 654.6 284.9 654.4 285.2 654.3 285.6 654.2 286.0 654.1 286.3 654.0 286.7 654.0 287.0 654.0 287.4 654.1 287.7 654.2 288.1 654.3 288.6 654.5 289.1 654.8 289.8 655.2 290.5 655.6 291.2 656.0 292.2 656.4 293.0 656.7 293.8 657.0 294.5 657.2 295.2 657.3 295.8 657.3 296.3 657.3 296.8 657.3 297.4 657.2 297.9 657.1 298.4 656.9 298.9 656.7 299.4 656.4 299.9 656.2 300.4 655.8 301.0 655.5 301.5 655.0 302.1 654.6 302.6 654.1 303.2 653.5 303.7 653.0 304.3 652.3 304.9 651.7 305.5ZM646.9 318.4 650.1 315.9 653.3 313.4 656.5 310.9 659.7 308.4 662.9 305.9 666.1 303.4 669.3 300.9 672.5 298.4 675.6 296.0 678.8 293.5 682.0 291.0 683.8 292.8 685.6 294.6 687.4 296.4 689.1 298.3 690.8 300.2 692.5 302.1 694.1 304.0 695.7 305.9 697.2 307.9 690.9 311.6 689.3 309.5 687.6 307.5 685.9 305.5 684.1 303.5 682.3 301.5 680.5 299.6 675.9 302.9 671.4 306.2 673.0 307.8 674.5 309.5 676.0 311.2 677.5 313.0 679.0 314.7 680.4 316.5 674.2 320.3 672.8 318.6 671.4 316.9 670.0 315.3 668.5 313.6 667.0 312.0 665.5 310.4 662.3 312.7 659.2 315.0 656.0 317.3 657.3 318.8 658.7 320.2 660.0 321.7 661.3 323.2 662.5 324.7 663.7 326.2 664.9 327.7 658.6 331.4 657.4 329.9 656.2 328.4 655.0 326.9 653.7 325.4 652.4 324.0 651.1 322.6 649.7 321.1 648.3 319.7 646.9 318.4ZM670.2 349.8 673.6 347.8 677.0 345.8 680.3 343.7 679.3 341.8 678.2 339.9 677.1 338.0 675.9 336.1 672.0 337.2 668.2 338.3 664.3 339.5 663.1 337.6 661.8 335.8 665.6 334.5 669.3 333.3 673.1 332.2 676.9 331.0 680.7 329.9 684.5 328.9 688.4 327.8 692.2 326.8 696.1 325.9 700.0 324.9 703.9 324.0 707.8 323.2 709.6 326.2 711.3 329.3 708.2 331.5 705.0 333.7 701.8 335.8 698.6 337.9 695.3 340.0 692.1 342.1 688.8 344.1 685.5 346.1 682.2 348.0 678.9 349.9 675.5 351.8 672.1 353.7 671.2 351.7 670.2 349.8ZM703.1 329.0 702.4 329.2 702.0 329.3 701.6 329.4 701.1 329.5 700.7 329.7 700.2 329.8 699.7 329.9 698.8 330.1 697.2 330.5 694.8 331.1 691.6 331.8 687.7 332.8 683.1 334.0 684.3 336.0 685.4 338.0 686.5 340.0 690.2 337.6 693.9 335.2 697.6 332.8 701.2 330.3 703.1 329.0ZM674.9 360.3 679.0 359.1 683.0 358.0 687.1 356.8 691.2 355.6 695.2 354.4 699.3 353.3 703.4 352.1 707.4 350.9 711.5 349.8 715.6 348.6 719.6 347.4 720.6 349.9 721.4 352.3 717.2 353.4 713.0 354.5 708.8 355.6 704.6 356.7 700.4 357.7 696.2 358.8 691.9 359.9 687.7 361.0 683.5 362.1 684.1 363.7 684.6 365.4 685.1 367.1 685.6 368.8 686.0 370.4 686.4 372.1 678.9 373.5 678.5 371.8 678.1 370.1 677.6 368.5 677.1 366.8 676.6 365.2 676.1 363.5 675.5 361.9 674.9 360.3ZM719.5 389.0 721.4 391.6 723.2 394.3 716.6 395.9 715.6 393.2 714.4 390.4 710.9 392.6 707.4 394.7 703.2 390.9 707.4 389.2 711.5 387.4 707.1 386.1 702.8 384.9 706.4 380.6 710.1 382.3 713.9 384.1 714.6 381.2 715.2 378.3 722.0 379.2 720.6 382.1 719.2 384.9 723.7 384.4 728.3 383.9 728.7 389.0 724.1 389.0 719.5 389.0Z"/>
<path d="M415.2 450.7 411.3 452.3 407.3 453.9 403.3 455.5 399.3 457.2 395.4 458.8 391.4 460.4 387.4 462.0 383.4 463.6 379.5 465.3 377.9 462.2 376.3 459.2 380.4 457.7 384.4 456.2 388.5 454.7 392.5 453.3 396.6 451.8 400.6 450.3 404.7 448.8 408.7 447.4 412.8 445.9 411.6 443.4 410.5 440.9 409.5 438.3 416.7 436.2 417.5 438.1 418.3 440.0 419.1 441.9 420.0 443.7 421.0 445.6 421.9 447.4 422.9 449.3 424.0 451.1 425.0 452.9 426.1 454.7 419.5 457.9 418.0 455.5 416.6 453.1 415.2 450.7ZM387.3 478.2 391.0 476.3 394.7 474.4 398.4 472.6 402.1 470.7 405.8 468.8 409.5 466.9 413.2 465.0 416.9 463.1 420.6 461.2 424.3 459.4 428.0 457.5 429.2 459.2 430.4 460.9 431.7 462.7 433.0 464.4 434.3 466.0 435.7 467.7 437.1 469.3 438.5 470.9 440.0 472.5 434.1 476.7 432.4 474.9 430.7 473.0 429.1 471.1 427.5 469.2 426.0 467.2 424.5 465.2 419.5 468.0 414.5 470.8 416.0 472.8 417.6 474.7 419.1 476.7 420.7 478.6 422.4 480.5 424.1 482.3 418.1 486.5 416.4 484.5 414.6 482.6 412.9 480.5 411.3 478.5 409.7 476.5 408.1 474.4 404.6 476.3 401.1 478.3 397.7 480.2 399.3 482.4 401.0 484.6 402.7 486.7 404.5 488.8 406.3 490.9 408.2 492.9 410.0 494.9 404.2 499.2 402.1 497.0 400.1 494.7 398.1 492.4 396.2 490.1 394.3 487.8 392.5 485.5 390.7 483.1 389.0 480.7 387.3 478.2ZM423.4 516.5 424.7 513.1 426.0 509.7 427.4 506.4 428.8 503.1 430.3 499.8 426.6 501.2 422.8 502.5 419.0 503.8 415.1 505.0 411.2 506.2 408.7 503.8 406.2 501.3 410.0 500.4 413.7 499.4 417.4 498.4 421.1 497.3 424.7 496.2 428.3 495.0 431.9 493.8 433.5 490.6 435.2 487.4 436.9 484.3 438.7 481.2 440.6 478.1 442.5 475.1 444.4 476.9 446.2 478.7 444.2 482.1 442.2 485.5 440.3 489.0 438.5 492.5 442.5 490.9 446.5 489.1 450.4 487.4 454.2 485.5 456.3 487.1 458.4 488.7 455.1 490.4 451.6 492.1 448.1 493.8 444.6 495.4 441.1 497.0 437.5 498.5 436.1 501.6 434.8 504.7 433.5 507.9 432.3 511.1 431.2 514.3 430.1 517.5 429.1 520.8 426.2 518.7 423.4 516.5ZM466.0 501.8 463.6 505.0 461.1 508.2 458.7 511.3 456.3 514.5 453.9 517.7 451.4 520.9 449.0 524.1 446.6 527.3 444.1 530.4 441.1 528.6 438.0 526.8 440.6 523.7 443.2 520.6 445.8 517.5 448.3 514.4 450.9 511.3 453.5 508.2 456.0 505.1 458.6 502.0 461.2 498.9 458.8 497.4 456.4 495.8 454.1 494.1 458.9 489.0 460.7 490.2 462.4 491.4 464.2 492.6 466.1 493.8 467.9 494.9 469.8 496.0 471.7 497.1 473.6 498.2 475.5 499.2 477.5 500.2 473.7 505.9 471.1 504.6 468.5 503.2 466.0 501.8ZM486.1 548.4 485.9 545.1 485.8 541.7 485.7 538.4 485.7 535.0 485.7 531.7 482.5 530.6 479.3 529.4 477.6 533.0 475.8 536.6 474.0 540.1 472.2 543.7 469.2 542.5 466.2 541.3 468.1 538.0 469.9 534.6 471.8 531.3 473.7 527.9 475.5 524.5 477.4 521.2 479.2 517.8 481.1 514.5 482.9 511.1 484.8 507.7 486.6 504.4 488.7 505.2 490.8 506.0 493.0 506.8 495.1 507.6 497.3 508.3 498.5 508.8 499.5 509.4 500.4 510.2 501.2 511.0 501.8 512.0 502.2 513.2 502.5 514.4 502.6 515.8 502.5 517.3 502.3 518.9 501.9 520.6 501.3 522.5 500.8 523.8 500.2 525.0 499.6 526.2 498.9 527.3 498.1 528.2 497.3 529.1 496.4 529.9 495.5 530.6 494.5 531.1 493.6 531.5 492.6 531.7 491.6 531.8 491.7 535.5 492.0 539.2 492.3 542.9 492.6 546.6 493.1 550.4 489.6 549.4 486.1 548.4ZM496.1 521.3 496.6 519.6 496.8 518.1 496.7 516.8 496.2 515.8 495.3 515.0 494.1 514.4 492.0 513.7 490.0 513.0 488.0 512.2 486.1 515.9 484.3 519.6 482.4 523.3 484.7 524.2 486.9 525.0 489.2 525.7 489.9 525.9 490.7 526.0 491.3 526.0 492.0 525.9 492.6 525.6 493.2 525.3 493.8 524.9 494.3 524.3 494.8 523.7 495.3 523.0 495.7 522.2 496.1 521.3ZM534.6 536.0 534.4 538.1 534.1 540.1 533.7 542.0 533.1 543.8 532.4 545.5 531.6 547.1 530.7 548.6 529.7 549.9 528.6 551.2 527.4 552.2 526.1 553.2 524.6 554.0 523.1 554.6 521.5 555.1 519.9 555.4 518.2 555.5 516.4 555.5 514.6 555.3 511.9 554.7 509.5 553.8 507.4 552.7 505.6 551.2 504.1 549.4 502.9 547.4 502.1 545.1 501.6 542.7 501.5 540.1 501.7 537.3 502.3 534.4 503.1 531.3 504.2 528.3 505.4 525.6 506.7 523.1 508.2 520.9 509.8 519.0 511.5 517.3 513.2 515.9 515.0 514.9 516.8 514.1 518.7 513.7 520.7 513.6 522.8 513.7 524.8 514.2 526.6 514.9 528.2 515.8 529.7 517.1 530.9 518.6 532.1 520.4 533.0 522.5 533.8 524.8 534.3 527.2 534.7 529.9 534.8 532.9 534.6 536.0ZM527.9 535.5 528.1 533.3 528.2 531.4 528.1 529.5 527.8 527.8 527.5 526.3 527.0 524.9 526.4 523.7 525.6 522.6 524.8 521.8 523.8 521.1 522.7 520.7 521.5 520.4 520.2 520.3 518.9 520.4 517.8 520.7 516.6 521.3 515.5 522.0 514.5 523.0 513.5 524.2 512.6 525.5 511.7 527.1 510.9 528.8 510.2 530.7 509.6 532.8 509.1 534.9 508.8 536.9 508.7 538.8 508.7 540.5 509.0 542.1 509.5 543.6 510.1 545.0 510.9 546.1 511.9 547.0 513.1 547.8 514.4 548.3 515.9 548.7 517.5 548.8 518.9 548.7 520.3 548.3 521.6 547.7 522.8 546.9 523.9 545.9 524.9 544.6 525.8 543.2 526.5 541.5 527.1 539.7 527.5 537.7 527.9 535.5ZM553.4 557.4 550.9 557.4 548.6 557.1 546.5 556.5 544.6 555.7 542.9 554.7 541.4 553.4 540.2 551.9 539.3 550.2 538.6 548.3 538.2 546.2 538.0 544.0 538.0 541.5 538.2 537.8 538.4 534.2 538.6 530.5 538.7 526.9 538.9 523.2 539.1 519.5 539.3 515.9 542.3 516.0 545.2 516.0 545.2 519.6 545.2 523.1 545.2 526.7 545.2 530.3 545.2 533.8 545.2 537.4 545.2 541.0 545.2 542.5 545.4 543.9 545.7 545.2 546.1 546.4 546.6 547.4 547.2 548.3 548.0 549.1 548.8 549.7 549.8 550.2 550.8 550.5 552.0 550.7 553.3 550.7 554.6 550.6 555.8 550.3 556.9 549.9 557.8 549.3 558.7 548.6 559.4 547.7 559.9 546.8 560.4 545.7 560.7 544.4 560.8 543.1 560.8 541.6 560.7 540.1 560.4 536.6 560.0 533.0 559.6 529.5 559.2 526.0 558.9 522.5 558.5 519.0 558.1 515.5 561.1 515.2 564.0 514.9 564.6 518.5 565.1 522.0 565.7 525.6 566.2 529.2 566.8 532.7 567.4 536.3 567.9 539.9 568.2 542.4 568.2 544.7 568.0 546.8 567.4 548.8 566.6 550.7 565.5 552.3 564.1 553.8 562.4 555.0 560.5 556.0 558.4 556.7 556.0 557.2 553.4 557.4ZM597.8 550.4 595.2 547.7 592.7 545.1 590.2 542.4 587.8 539.7 585.4 537.0 583.1 534.2 580.8 531.4 578.7 528.6 576.6 525.8 574.5 522.9 575.0 524.4 575.4 525.7 575.7 526.9 576.1 528.1 576.3 529.1 576.6 530.1 577.5 534.0 578.4 538.0 579.4 541.9 580.3 545.9 581.2 549.8 582.1 553.8 578.6 554.4 575.1 554.9 574.4 551.2 573.8 547.5 573.1 543.9 572.4 540.2 571.7 536.5 571.0 532.8 570.3 529.2 569.6 525.5 568.9 521.8 568.2 518.1 567.5 514.4 570.9 513.9 574.2 513.3 576.2 516.2 578.3 519.1 580.5 521.9 582.7 524.7 585.0 527.5 587.3 530.2 589.7 532.9 592.2 535.6 594.7 538.3 597.3 540.9 596.7 539.6 596.1 538.3 595.5 537.0 595.0 535.8 594.6 534.6 594.1 533.4 592.8 529.6 591.4 525.8 590.1 522.0 588.7 518.2 587.3 514.4 586.0 510.7 588.5 509.9 591.0 509.2 592.4 512.7 593.9 516.2 595.3 519.7 596.7 523.3 598.1 526.8 599.6 530.3 601.0 533.8 602.4 537.3 603.9 540.8 605.3 544.3 606.7 547.9 602.3 549.2 597.8 550.4ZM626.0 517.2 627.1 519.1 628.2 520.8 629.0 522.6 629.8 524.3 630.4 526.0 630.8 527.6 631.1 529.2 631.2 530.7 631.2 532.2 631.0 533.6 630.6 534.9 630.1 536.2 629.5 537.3 628.7 538.4 627.7 539.4 626.7 540.2 625.5 541.0 624.1 541.6 621.2 542.8 618.2 543.9 615.2 545.0 612.1 546.1 610.6 542.6 609.0 539.2 607.5 535.7 605.9 532.2 604.3 528.7 602.8 525.3 601.2 521.8 599.7 518.3 598.1 514.9 596.6 511.4 595.0 507.9 597.0 507.2 599.0 506.5 601.0 505.7 603.0 504.9 604.8 504.3 606.7 504.0 608.5 504.0 610.4 504.3 612.3 504.9 614.3 505.8 616.2 507.0 618.2 508.5 620.2 510.2 622.1 512.3 624.1 514.6 626.0 517.2ZM620.8 519.8 619.6 517.9 618.4 516.3 617.1 514.9 615.9 513.6 614.7 512.6 613.4 511.8 612.1 511.1 610.9 510.7 609.7 510.5 608.5 510.4 607.3 510.6 606.1 511.0 602.7 512.3 604.5 516.0 606.3 519.6 608.1 523.2 609.9 526.9 611.7 530.5 613.5 534.1 615.4 537.8 617.9 536.8 620.4 535.8 621.5 535.2 622.5 534.5 623.3 533.5 623.8 532.5 624.2 531.2 624.3 529.9 624.2 528.4 624.0 526.8 623.5 525.2 622.8 523.4 621.9 521.6 620.8 519.8ZM652.5 527.0 648.7 522.4 648.4 521.2 648.1 520.0 647.8 518.7 647.6 517.4 647.4 516.1 647.3 514.8 647.3 513.4 647.2 512.0 647.2 510.6 647.2 509.0 647.3 507.5 647.4 505.9 647.4 504.4 647.4 503.0 647.3 501.8 647.2 500.6 647.0 499.6 646.8 498.7 646.6 497.9 646.3 497.2 645.9 496.5 645.5 495.8 645.0 495.2 644.5 494.6 643.2 493.4 641.9 492.6 640.7 492.2 639.5 492.1 638.4 492.3 637.4 492.9 636.9 493.2 636.6 493.6 636.3 494.1 636.2 494.6 636.1 495.1 636.1 495.6 636.2 496.2 636.4 496.8 636.7 497.4 637.1 498.1 637.5 498.9 638.1 499.6 635.4 501.1 632.7 502.6 631.6 501.0 630.8 499.5 630.1 498.0 629.7 496.6 629.4 495.2 629.3 494.0 629.4 492.8 629.6 491.6 630.1 490.6 630.7 489.6 631.5 488.7 632.5 487.9 633.7 487.1 635.0 486.5 636.2 486.1 637.5 485.9 638.9 485.8 640.3 486.0 641.7 486.3 643.1 486.8 644.5 487.5 646.0 488.3 647.4 489.4 648.9 490.6 649.6 491.3 650.3 492.0 650.9 492.7 651.5 493.4 652.0 494.1 652.4 494.9 652.8 495.6 653.1 496.4 653.4 497.1 653.7 497.9 653.9 498.6 654.1 499.4 654.2 500.2 654.3 500.9 654.4 501.7 654.4 502.5 654.5 503.3 654.5 504.1 654.4 504.8 654.4 505.6 654.4 506.4 654.4 507.1 654.3 507.9 654.3 508.6 654.2 509.4 654.2 510.1 654.2 510.8 654.2 511.6 654.2 512.3 654.2 513.0 654.2 513.7 654.3 514.4 654.4 515.0 654.6 515.7 654.8 516.3 655.0 517.0 657.7 515.1 660.3 513.1 662.9 511.1 665.5 509.1 668.0 507.0 673.4 511.8 670.9 513.9 668.4 515.9 665.9 517.9 663.3 519.8 660.7 521.7 658.0 523.5 655.3 525.3 652.5 527.0ZM674.5 479.6 677.5 481.6 680.2 483.6 682.5 485.6 684.4 487.5 685.9 489.4 687.0 491.3 687.7 493.2 688.0 495.1 687.9 496.9 687.3 498.6 686.4 500.3 685.0 501.9 681.6 504.4 677.7 505.5 673.4 505.2 668.7 503.5 663.6 500.5 658.1 496.1 656.2 494.4 654.5 492.8 652.9 491.2 651.5 489.7 650.3 488.2 649.3 486.8 648.4 485.5 647.6 484.2 647.0 483.0 646.6 481.9 646.3 480.8 646.1 479.8 646.1 478.8 646.3 477.8 646.6 476.9 647.0 476.0 647.6 475.1 648.4 474.3 649.6 473.2 651.0 472.5 652.6 472.0 654.3 471.7 656.2 471.8 658.2 472.1 660.4 472.7 662.9 473.5 665.5 474.6 668.3 476.0 671.3 477.6 674.5 479.6ZM670.1 484.6 668.4 483.5 666.9 482.4 665.5 481.5 664.2 480.7 663.0 480.0 661.9 479.4 660.9 478.9 659.9 478.4 659.1 478.1 658.3 477.8 657.6 477.6 656.9 477.5 656.3 477.5 655.8 477.5 655.3 477.6 654.8 477.9 654.3 478.1 653.9 478.5 653.5 478.9 653.3 479.4 653.1 479.9 653.0 480.3 653.0 480.8 653.1 481.4 653.4 481.9 653.7 482.5 654.1 483.1 654.6 483.8 655.3 484.6 656.0 485.3 656.8 486.2 657.8 487.1 659.0 488.1 660.2 489.2 661.6 490.3 663.1 491.6 664.7 492.8 666.1 493.9 667.5 494.9 668.7 495.8 669.9 496.5 670.9 497.2 671.9 497.7 672.8 498.2 673.7 498.6 674.5 498.8 675.3 499.0 675.9 499.1 676.6 499.1 677.2 499.0 677.8 498.8 678.4 498.5 678.9 498.2 679.4 497.7 679.9 497.2 680.2 496.7 680.4 496.1 680.5 495.6 680.5 495.0 680.4 494.5 680.2 493.9 679.9 493.2 679.4 492.6 678.9 491.9 678.2 491.1 677.4 490.4 676.5 489.5 675.5 488.7 674.3 487.7 673.0 486.8 671.6 485.7 670.1 484.6ZM695.6 489.2 690.2 486.0 689.4 484.9 688.6 483.9 687.9 482.8 687.2 481.6 686.6 480.5 685.9 479.2 685.3 478.0 684.8 476.7 684.2 475.4 683.6 473.9 683.1 472.5 682.5 471.0 682.0 469.6 681.4 468.3 680.9 467.2 680.3 466.2 679.8 465.3 679.2 464.5 678.7 463.8 678.1 463.2 677.5 462.6 676.8 462.1 676.2 461.7 675.4 461.3 673.7 460.6 672.2 460.2 670.9 460.1 669.8 460.3 668.9 460.8 668.1 461.6 667.9 462.0 667.7 462.5 667.6 463.0 667.7 463.4 667.8 463.9 668.0 464.4 668.4 464.9 668.8 465.4 669.3 466.0 669.9 466.5 670.6 467.1 671.4 467.7 669.5 469.8 667.6 471.8 666.0 470.6 664.6 469.4 663.4 468.2 662.4 467.0 661.6 465.9 661.0 464.7 660.7 463.6 660.5 462.5 660.5 461.4 660.7 460.3 661.1 459.3 661.7 458.2 662.5 457.2 663.4 456.3 664.4 455.6 665.6 455.1 666.8 454.7 668.2 454.4 669.6 454.4 671.1 454.5 672.7 454.7 674.4 455.1 676.2 455.7 678.0 456.4 679.0 456.9 679.9 457.3 680.7 457.8 681.5 458.4 682.3 458.9 682.9 459.5 683.6 460.1 684.2 460.7 684.7 461.3 685.3 461.9 685.8 462.6 686.2 463.2 686.7 463.9 687.1 464.6 687.4 465.3 687.8 466.0 688.1 466.7 688.4 467.4 688.7 468.2 689.0 468.9 689.2 469.6 689.5 470.3 689.8 471.0 690.0 471.7 690.3 472.4 690.5 473.1 690.8 473.8 691.1 474.4 691.3 475.1 691.6 475.8 691.9 476.4 692.3 477.0 692.6 477.6 693.0 478.2 693.5 478.7 693.9 479.2 695.7 476.8 697.4 474.3 699.1 471.7 700.6 469.2 702.2 466.6 709.1 469.7 707.6 472.2 706.0 474.7 704.4 477.2 702.7 479.6 701.0 482.1 699.2 484.5 697.4 486.9 695.6 489.2ZM716.3 455.7 717.9 452.1 719.3 448.4 715.3 447.2 711.2 446.0 707.2 444.8 703.1 443.6 699.0 442.4 695.0 441.2 690.9 440.1 686.8 438.9 682.8 437.7 678.7 436.5 674.7 435.3 672.9 439.6 674.4 442.3 675.7 445.1 677.1 448.0 678.3 450.9 684.1 450.2 682.5 446.8 680.8 443.6 684.7 444.9 688.7 446.3 692.6 447.6 696.5 449.0 700.5 450.3 704.4 451.7 708.4 453.0 712.3 454.4 716.3 455.7Z"/>
<path d="M495.1 405.8 495.0 407.6 494.8 409.3 494.5 410.9 494.0 412.3 493.3 413.5 492.5 414.6 491.6 415.5 490.6 416.3 489.4 416.9 488.1 417.3 486.6 417.6 485.0 417.7 483.6 417.6 482.2 417.4 481.0 417.0 479.8 416.5 478.8 415.8 477.9 415.0 477.1 414.0 476.4 412.9 475.8 411.6 475.3 410.2 474.9 408.6 474.6 406.9 477.0 406.2 479.4 405.6 479.5 406.6 479.8 407.5 480.1 408.3 480.4 409.0 480.8 409.6 481.2 410.1 481.7 410.5 482.3 410.9 482.9 411.2 483.6 411.4 484.3 411.5 485.1 411.5 486.7 411.4 488.0 410.9 489.0 410.2 489.7 409.2 490.2 407.9 490.3 406.3 490.3 405.7 490.2 405.2 490.2 404.8 490.0 404.3 489.9 403.9 489.7 403.5 489.5 403.2 489.3 402.8 489.0 402.5 488.7 402.2 488.4 402.0 488.0 401.7 487.6 401.5 487.1 401.2 486.5 400.9 485.7 400.6 484.9 400.3 483.9 400.0 483.1 399.6 482.3 399.3 481.7 399.0 481.1 398.8 480.6 398.5 480.2 398.3 479.9 398.1 479.6 397.9 479.2 397.6 478.9 397.4 478.6 397.1 478.4 396.8 478.1 396.5 477.8 396.2 477.6 395.9 477.4 395.5 477.1 395.2 476.9 394.8 476.8 394.4 476.6 393.9 476.4 393.5 476.3 393.0 476.1 392.5 476.0 392.0 475.9 391.4 475.8 390.8 475.8 390.2 475.7 389.6 475.7 389.0 475.7 388.3 475.8 386.6 476.0 385.0 476.3 383.6 476.8 382.3 477.4 381.2 478.1 380.1 479.0 379.3 479.9 378.6 481.0 378.0 482.3 377.6 483.6 377.4 485.1 377.3 486.5 377.4 487.8 377.6 488.9 377.9 489.9 378.3 490.9 378.9 491.6 379.6 492.3 380.4 492.9 381.4 493.5 382.6 493.9 384.0 494.2 385.5 494.5 387.1 492.1 387.7 489.7 388.2 489.6 387.4 489.4 386.7 489.1 386.0 488.9 385.4 488.6 384.9 488.2 384.4 487.8 384.0 487.3 383.7 486.8 383.5 486.3 383.3 485.6 383.2 485.0 383.1 483.6 383.3 482.5 383.6 481.6 384.3 481.0 385.2 480.6 386.4 480.5 387.8 480.5 388.3 480.6 388.8 480.6 389.2 480.7 389.6 480.8 390.0 481.0 390.3 481.1 390.6 481.3 390.9 481.6 391.2 481.8 391.5 482.1 391.7 482.4 392.0 482.8 392.2 483.2 392.5 483.8 392.7 484.5 393.0 485.3 393.3 486.2 393.7 487.3 394.1 488.2 394.5 489.1 394.8 489.8 395.2 490.5 395.5 491.0 395.9 491.5 396.2 491.9 396.6 492.3 397.0 492.7 397.4 493.0 397.8 493.3 398.3 493.6 398.7 493.9 399.2 494.1 399.7 494.3 400.3 494.5 400.9 494.6 401.5 494.8 402.1 494.9 402.8 495.0 403.5 495.0 404.2 495.1 405.0 495.1 405.8ZM512.0 384.2 512.0 387.9 512.0 391.5 512.0 395.2 512.0 398.8 512.0 402.5 512.0 406.1 512.0 409.8 512.0 413.4 512.0 417.1 509.2 417.1 506.4 417.1 506.4 413.4 506.4 409.8 506.4 406.1 506.4 402.5 506.4 398.8 506.4 395.2 506.4 391.5 506.4 387.9 506.4 384.2 503.4 384.2 500.5 384.2 497.6 384.2 497.6 377.9 499.9 377.9 502.2 377.9 504.6 377.9 506.9 377.9 509.2 377.9 511.5 377.9 513.8 377.9 516.2 377.9 518.5 377.9 520.8 377.9 520.8 384.2 517.9 384.2 515.0 384.2 512.0 384.2ZM546.2 417.1 545.3 413.8 544.4 410.4 543.5 407.1 540.6 407.1 537.6 407.1 534.7 407.1 531.8 407.1 530.9 410.4 530.0 413.8 529.0 417.1 525.8 417.1 522.6 417.1 523.5 413.8 524.5 410.6 525.4 407.3 526.3 404.0 527.3 400.8 528.2 397.5 529.1 394.2 530.1 391.0 531.0 387.7 532.0 384.4 532.9 381.2 533.8 377.9 537.6 377.9 541.4 377.9 542.4 381.2 543.3 384.4 544.2 387.7 545.1 391.0 546.1 394.2 547.0 397.5 547.9 400.8 548.9 404.0 549.8 407.3 550.7 410.6 551.7 413.8 552.6 417.1 549.4 417.1 546.2 417.1ZM537.6 383.9 537.5 384.5 537.4 384.9 537.3 385.2 537.3 385.6 537.2 386.0 537.1 386.4 537.0 386.8 536.8 387.6 536.4 389.0 535.9 391.0 535.2 393.7 534.3 397.0 533.2 400.9 536.2 400.9 539.1 400.9 542.1 400.9 541.0 397.2 540.0 393.4 539.0 389.6 538.1 385.9 537.6 383.9ZM583.6 417.1 583.6 413.7 583.6 410.3 583.6 406.9 583.6 403.5 583.6 400.1 583.6 396.7 583.6 393.3 583.6 393.1 583.6 392.8 583.6 392.5 583.6 392.3 583.7 392.0 583.7 391.7 583.7 391.3 583.7 390.6 583.7 389.6 583.8 388.3 583.8 386.7 583.9 384.8 583.4 387.2 582.9 389.3 582.4 391.1 582.1 392.8 581.7 394.1 581.4 395.2 580.5 398.9 579.5 402.5 578.5 406.2 577.5 409.8 576.6 413.5 575.6 417.1 570.7 417.1 569.7 413.5 568.8 409.8 567.8 406.2 566.8 402.5 565.8 398.9 564.9 395.2 564.0 391.8 563.2 388.3 562.4 384.8 562.5 386.8 562.5 388.6 562.6 390.2 562.6 391.5 562.6 392.5 562.7 393.3 562.7 396.7 562.7 400.1 562.7 403.5 562.7 406.9 562.7 410.3 562.7 413.7 562.7 417.1 559.6 417.1 556.6 417.1 556.6 413.5 556.6 410.0 556.6 406.4 556.6 402.8 556.6 399.3 556.6 395.7 556.6 392.2 556.6 388.6 556.6 385.0 556.6 381.5 556.6 377.9 559.6 377.9 562.7 377.9 565.7 377.9 566.7 381.6 567.7 385.2 568.6 388.9 569.6 392.5 570.6 396.2 571.6 399.8 572.1 401.9 573.2 407.2 574.6 400.9 575.5 397.6 576.3 394.3 577.2 391.0 578.1 387.8 578.9 384.5 579.8 381.2 580.6 377.9 583.6 377.9 586.7 377.9 589.7 377.9 589.7 381.5 589.7 385.0 589.7 388.6 589.7 392.2 589.7 395.7 589.7 399.3 589.7 402.8 589.7 406.4 589.7 410.0 589.7 413.5 589.7 417.1 586.7 417.1 583.6 417.1ZM617.7 390.3 617.7 391.5 617.6 392.7 617.4 393.9 617.2 395.0 616.9 396.1 616.5 397.1 616.1 398.0 615.7 398.9 615.1 399.7 614.5 400.4 613.9 401.1 613.2 401.7 612.5 402.2 611.7 402.6 610.8 402.9 610.0 403.1 609.0 403.3 608.1 403.3 604.8 403.3 601.5 403.3 601.5 406.8 601.5 410.2 601.5 413.7 601.5 417.1 598.8 417.1 596.0 417.1 596.0 413.5 596.0 410.0 596.0 406.4 596.0 402.8 596.0 399.3 596.0 395.7 596.0 392.2 596.0 388.6 596.0 385.0 596.0 381.5 596.0 377.9 598.4 377.9 600.7 377.9 603.1 377.9 605.5 377.9 607.9 377.9 609.4 378.0 610.8 378.3 612.0 378.7 613.2 379.3 614.2 380.2 615.1 381.1 615.9 382.3 616.6 383.6 617.1 385.1 617.4 386.7 617.6 388.4 617.7 390.3ZM612.1 390.4 612.0 388.6 611.6 387.0 610.9 385.8 610.0 385.0 608.7 384.4 607.2 384.3 604.4 384.3 601.5 384.3 601.5 388.5 601.5 392.7 601.5 397.0 604.5 397.0 607.4 397.0 608.1 396.9 608.8 396.8 609.4 396.6 610.0 396.2 610.5 395.8 610.9 395.3 611.3 394.7 611.6 394.0 611.8 393.2 612.0 392.4 612.1 391.5 612.1 390.4Z"/>
</g></svg>
</body></html>
